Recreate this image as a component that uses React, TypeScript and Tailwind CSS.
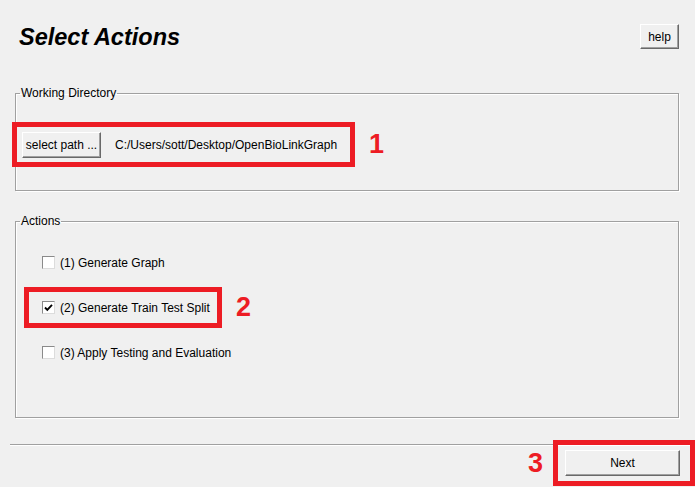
import { useState } from 'react'

const btn =
  'flex items-center justify-center bg-[#f0f0f0] border border-t-white border-l-white border-r-[#696969] border-b-[#696969] shadow-[inset_-1px_-1px_0_#a0a0a0] text-[12px] text-black'

const group = 'mx-[15px] mr-[16px] border border-[#a0a0a0] shadow-[inset_1px_1px_0_#ffffff,1px_1px_0_#ffffff]'

function Check({ checked, onChange }: { checked: boolean; onChange: () => void }) {
  return (
    <button
      onClick={onChange}
      className="flex h-[13px] w-[13px] shrink-0 items-center justify-center border border-t-[#8a8a8a] border-l-[#8a8a8a] border-r-[#dcdcdc] border-b-[#dcdcdc] bg-white"
    >
      {checked && (
        <svg width="9" height="9" viewBox="0 0 9 9">
          <path d="M1 4.5 L3.3 6.8 L8 1.8" fill="none" stroke="#000" strokeWidth="1.9" />
        </svg>
      )}
    </button>
  )
}

function Mark({ n }: { n: string }) {
  return <span className="text-[27px] font-bold leading-none text-[#ed1c24]">{n}</span>
}

export default function App() {
  const [checks, setChecks] = useState([false, true, false])
  const toggle = (i: number) => setChecks((prev) => prev.map((v, j) => (j === i ? !v : v)))

  return (
    <div className="flex h-[487px] w-[695px] flex-col overflow-hidden bg-[#f0f0f0] font-['Liberation_Sans',Arial,sans-serif] text-black">
      <header className="flex h-[49px] items-end justify-between pl-[19px] pr-[16px]">
        <h1 className="flex h-[25px] items-center text-[23.5px] font-bold italic leading-[25px] translate-y-[1px]">Select Actions</h1>
        <button className={btnClass('h-[25px] w-[39px]')}>help</button>
      </header>

      <fieldset className={group + ' mt-[37px] pb-[23px]'}>
        <legend className="ml-[4px] px-px text-[12px] leading-[14px]">Working Directory</legend>
        <div className="mt-[22px] flex items-center gap-[14px]">
          <div className="-ml-[4px] flex h-[45px] w-[343px] items-center gap-[14px] border-[5px] border-[#ed1c24] pl-[5px]">
            <button className={btnClass('h-[26px] w-[79px]')}>select path ...</button>
            <span className="text-[12px]">C:/Users/sott/Desktop/OpenBioLinkGraph</span>
          </div>
          <Mark n="1" />
        </div>
      </fieldset>

      <fieldset className={group + ' mt-[23px] pb-[42px] pt-[12px]'}>
        <legend className="ml-[4px] px-px text-[12px] leading-[14px]">Actions</legend>
        <div className="flex h-[45px] items-center gap-[5px] pl-[26px] text-[12px]">
          <Check checked={checks[0]} onChange={() => toggle(0)} />
          <span>(1) Generate Graph</span>
        </div>
        <div className="flex h-[45px] items-center gap-[14px]">
          <div className="ml-[8px] flex h-[41px] w-[198px] items-center gap-[5px] border-[5px] border-[#ed1c24] pl-[13px] text-[12px]">
            <Check checked={checks[1]} onChange={() => toggle(1)} />
            <span>(2) Generate Train Test Split</span>
          </div>
          <Mark n="2" />
        </div>
        <div className="flex h-[45px] items-center gap-[5px] pl-[26px] text-[12px]">
          <Check checked={checks[2]} onChange={() => toggle(2)} />
          <span>(3) Apply Testing and Evaluation</span>
        </div>
      </fieldset>

      <div className="ml-[10px] mt-[26px] border-t border-b border-t-[#a0a0a0] border-b-white" />

      <div className="relative -mt-[6px] flex items-center justify-end gap-[10px]">
        <Mark n="3" />
        <div className="flex h-[46px] w-[142px] items-center border-[5px] border-[#ed1c24] pl-[7px]">
          <button className={btnClass('h-[26px] w-[115px]')}>Next</button>
        </div>
      </div>
    </div>
  )
}

function btnClass(extra: string) {
  return btn + ' ' + extra
}
